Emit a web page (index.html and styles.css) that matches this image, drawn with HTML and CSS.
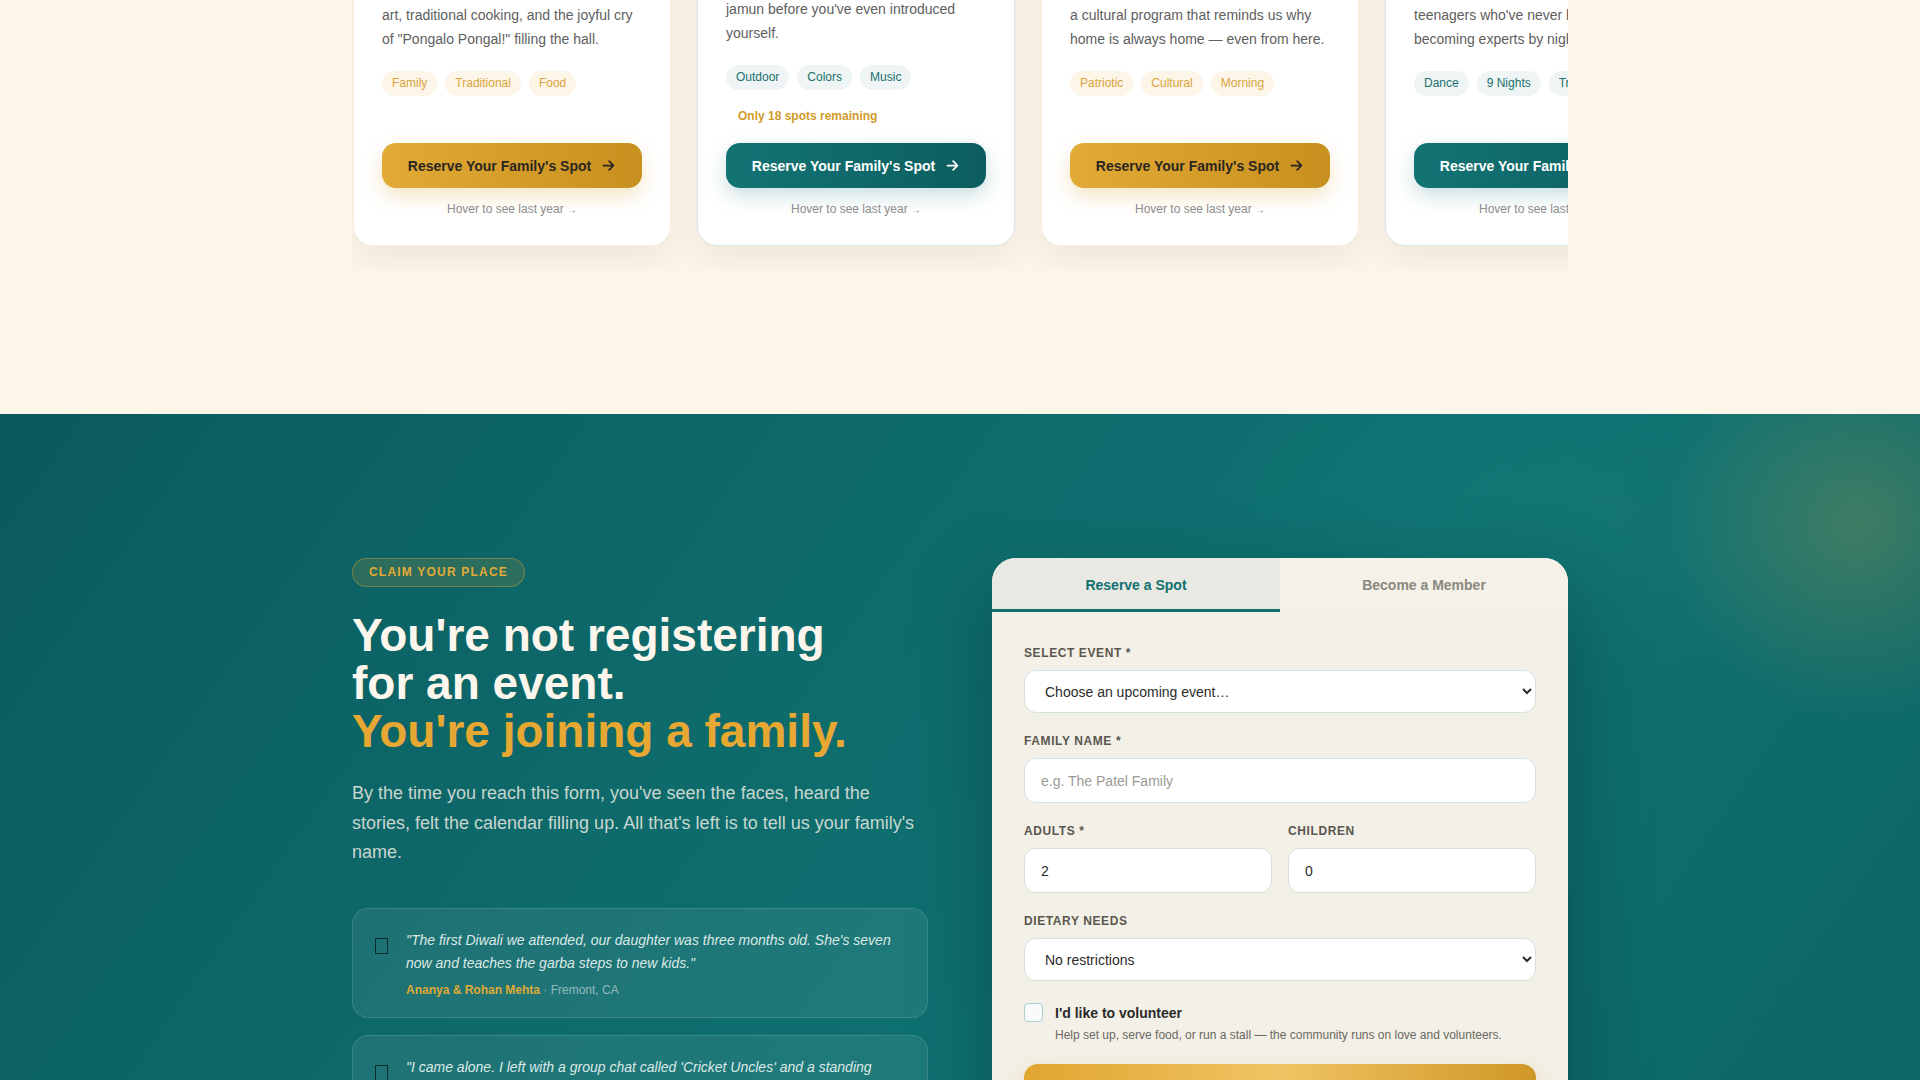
FILE: index.html
```html
<!DOCTYPE html>
<html lang="en">
<head>
    <meta charset="UTF-8">
    <meta name="viewport" content="width=device-width, initial-scale=1.0">
    <title>Join the Family – Community Events</title>
    <link rel="stylesheet" href="styles.css">
</head>
<body>
    <section class="events">
        <div class="events-clip">
            <div class="events-track">
                <article class="event-card event-card--gold">
                    <p class="event-date">Sun · January 14</p>
                    <h3 class="event-title">Pongal Harvest Festival</h3>
                    <p class="event-desc">Sweet pongal bubbling over, bright kolam art, traditional cooking, and the joyful cry of "Pongalo Pongal!" filling the hall.</p>
                    <div class="tags">
                        <span class="tag">Family</span>
                        <span class="tag">Traditional</span>
                        <span class="tag">Food</span>
                    </div>
                    <a class="btn-reserve" href="#">Reserve Your Family's Spot
                        <svg viewBox="0 0 24 24" width="15" height="15"><path d="M4 12h15M13 5l7 7-7 7"/></svg>
                    </a>
                    <p class="hover-hint">Hover to see last year <span class="hint-arrow">→</span></p>
                </article>

                <article class="event-card event-card--teal">
                    <p class="event-date">Sat · March 15</p>
                    <h3 class="event-title">Holi in the Park</h3>
                    <p class="event-desc">A morning of gulal and dhol beats. Someone's aunty will hand you a gulab jamun before you've even introduced yourself.</p>
                    <div class="tags">
                        <span class="tag">Outdoor</span>
                        <span class="tag">Colors</span>
                        <span class="tag">Music</span>
                    </div>
                    <p class="spots-left">Only 18 spots remaining</p>
                    <a class="btn-reserve" href="#">Reserve Your Family's Spot
                        <svg viewBox="0 0 24 24" width="15" height="15"><path d="M4 12h15M13 5l7 7-7 7"/></svg>
                    </a>
                    <p class="hover-hint">Hover to see last year <span class="hint-arrow">→</span></p>
                </article>

                <article class="event-card event-card--gold">
                    <p class="event-date">Fri · August 15</p>
                    <h3 class="event-title">Independence Day</h3>
                    <p class="event-desc">Flag hoisting at dawn, sweets, songs, and a cultural program that reminds us why home is always home — even from here.</p>
                    <div class="tags">
                        <span class="tag">Patriotic</span>
                        <span class="tag">Cultural</span>
                        <span class="tag">Morning</span>
                    </div>
                    <a class="btn-reserve" href="#">Reserve Your Family's Spot
                        <svg viewBox="0 0 24 24" width="15" height="15"><path d="M4 12h15M13 5l7 7-7 7"/></svg>
                    </a>
                    <p class="hover-hint">Hover to see last year <span class="hint-arrow">→</span></p>
                </article>

                <article class="event-card event-card--teal">
                    <p class="event-date">Oct 3 – Oct 11</p>
                    <h3 class="event-title">Navratri Garba Nights</h3>
                    <p class="event-desc">Nine nights of garba and dandiya, with teenagers who've never held a dandiya becoming experts by night three.</p>
                    <div class="tags">
                        <span class="tag">Dance</span>
                        <span class="tag">9 Nights</span>
                        <span class="tag">Traditional</span>
                    </div>
                    <a class="btn-reserve" href="#">Reserve Your Family's Spot
                        <svg viewBox="0 0 24 24" width="15" height="15"><path d="M4 12h15M13 5l7 7-7 7"/></svg>
                    </a>
                    <p class="hover-hint">Hover to see last year <span class="hint-arrow">→</span></p>
                </article>
            </div>
        </div>
    </section>

    <section class="join">
        <div class="join-inner">
            <div class="join-copy">
                <span class="eyebrow">Claim your place</span>
                <h2 class="join-title">You're not registering<br>for an event.<br><span class="accent">You're joining a family.</span></h2>
                <p class="join-lead">By the time you reach this form, you've seen the faces, heard the stories, felt the calendar filling up. All that's left is to tell us your family's name.</p>

                <div class="testimonials">
                    <figure class="testimonial">
                        <span class="testimonial-icon"></span>
                        <div>
                            <blockquote>"The first Diwali we attended, our daughter was three months old. She's seven now and teaches the garba steps to new kids."</blockquote>
                            <figcaption><strong>Ananya &amp; Rohan Mehta</strong> · Fremont, CA</figcaption>
                        </div>
                    </figure>
                    <figure class="testimonial">
                        <span class="testimonial-icon"></span>
                        <div>
                            <blockquote>"I came alone. I left with a group chat called 'Cricket Uncles' and a standing invitation to Sunday lunch."</blockquote>
                            <figcaption><strong>Vikram Iyer</strong> · San Jose, CA</figcaption>
                        </div>
                    </figure>
                </div>
            </div>

            <div class="form-card">
                <div class="form-tabs">
                    <button class="tab active" type="button">Reserve a Spot</button>
                    <button class="tab" type="button">Become a Member</button>
                </div>
                <form class="form-body">
                    <div class="field">
                        <label for="event">Select Event *</label>
                        <select id="event">
                            <option>Choose an upcoming event…</option>
                            <option>Pongal Harvest Festival</option>
                            <option>Holi in the Park</option>
                            <option>Independence Day</option>
                            <option>Navratri Garba Nights</option>
                        </select>
                    </div>
                    <div class="field">
                        <label for="family">Family Name *</label>
                        <input id="family" type="text" placeholder="e.g. The Patel Family">
                    </div>
                    <div class="field-row">
                        <div class="field">
                            <label for="adults">Adults *</label>
                            <input id="adults" type="text" value="2">
                        </div>
                        <div class="field">
                            <label for="children">Children</label>
                            <input id="children" type="text" value="0">
                        </div>
                    </div>
                    <div class="field">
                        <label for="diet">Dietary Needs</label>
                        <select id="diet">
                            <option>No restrictions</option>
                            <option>Vegetarian</option>
                            <option>Vegan</option>
                            <option>Jain</option>
                        </select>
                    </div>
                    <label class="volunteer">
                        <input type="checkbox">
                        <span>
                            <strong>I'd like to volunteer</strong>
                            <small>Help set up, serve food, or run a stall — the community runs on love and volunteers.</small>
                        </span>
                    </label>
                    <button class="btn-submit" type="submit">Reserve Our Spot</button>
                </form>
            </div>
        </div>
    </section>
</body>
</html>
```

FILE: styles.css
```css
* {
    box-sizing: border-box;
}
body {
    margin: 0;
    font-family: "Liberation Sans", Arial, sans-serif;
    color: #2b2b2b;
    background-color: #fcf5ea;
}

/* ---------- upcoming events strip ---------- */
.events {
    height: 414px;
    overflow: hidden;
    display: flex;
    flex-direction: column;
    justify-content: flex-end;
    padding-bottom: 144px;
    background-color: #fcf5ea;
}
.events-clip {
    flex-shrink: 0;
    width: 1216px;
    margin: 0 auto;
    overflow: hidden;
    padding-bottom: 24px;
}
.events-track {
    display: flex;
    align-items: flex-end;
    gap: 26px;
    padding-left: 1px;
}
.event-card {
    flex: 0 0 318px;
    display: flex;
    flex-direction: column;
    background-color: #fff;
    border-radius: 20px;
    padding: 28px 28px 27px;
    box-shadow: 0 12px 32px rgba(110, 80, 30, 0.09);
}
.event-card--gold {
    border: 1px solid #f7efe1;
}
.event-card--teal {
    border: 1px solid #d5e7e7;
}
.event-date {
    margin: 0 0 8px;
    font-size: 12px;
    color: #999;
}
.event-title {
    margin: 0 0 10px;
    font-size: 20px;
    color: #1f1f1f;
}
.event-desc {
    margin: 0;
    font-size: 14px;
    line-height: 23.3px;
    color: #5e5e5e;
}
.tags {
    display: flex;
    gap: 8px;
    margin-top: 20px;
    white-space: nowrap;
}
.tag {
    display: inline-block;
    height: 25px;
    line-height: 25px;
    padding: 0 10px;
    border-radius: 999px;
    font-size: 12px;
}
.event-card--gold .tag {
    background-color: #fdf6e8;
    color: #d9a33c;
}
.event-card--teal .tag {
    background-color: #eef5f4;
    color: #1b6f6f;
}
.spots-left {
    margin: 17px 0 0;
    padding-left: 12px;
    font-size: 12px;
    line-height: 18px;
    font-weight: bold;
    color: #d29a2a;
}
.btn-reserve {
    display: flex;
    align-items: center;
    justify-content: center;
    gap: 10px;
    height: 45px;
    margin-top: 47px;
    border-radius: 14px;
    font-size: 14px;
    font-weight: bold;
    text-decoration: none;
    white-space: nowrap;
}
.spots-left + .btn-reserve {
    margin-top: 18px;
}
.btn-reserve svg {
    fill: none;
    stroke: currentColor;
    stroke-width: 2.8;
    stroke-linecap: round;
    stroke-linejoin: round;
}
.event-card--gold .btn-reserve {
    background: linear-gradient(90deg, #e2aa36, #c8911f);
    color: #2a2620;
    box-shadow: 0 8px 20px rgba(214, 160, 48, 0.28);
}
.event-card--teal .btn-reserve {
    background: linear-gradient(90deg, #137474, #0c5d5f);
    color: #fff;
    box-shadow: 0 8px 20px rgba(15, 110, 110, 0.22);
}
.hover-hint {
    margin: 13px 0 0;
    text-align: center;
    font-size: 12px;
    line-height: 16px;
    color: #8c8c8c;
    white-space: nowrap;
}
.hint-arrow {
    font-size: 10px;
}

/* ---------- join / registration ---------- */
.join {
    padding: 144px 0 140px;
    background:
        radial-gradient(circle at 1860px 110px, rgba(214, 170, 70, 0.24), rgba(214, 170, 70, 0) 200px),
        radial-gradient(ellipse at 1600px 100px, rgba(30, 130, 125, 0.25), rgba(30, 130, 125, 0) 380px),
        linear-gradient(125deg, #0a5a5e 0%, #0e6a6b 35%, #0f7272 60%, #0c6464 100%);
}
.join-inner {
    width: 1216px;
    margin: 0 auto;
    display: grid;
    grid-template-columns: 576px 576px;
    gap: 64px;
    align-items: start;
}
.eyebrow {
    display: inline-block;
    padding: 6px 16px;
    line-height: 15px;
    border: 1px solid rgba(224, 168, 48, 0.4);
    border-radius: 999px;
    background-color: rgba(212, 160, 48, 0.16);
    color: #e2aa36;
    font-size: 12px;
    font-weight: bold;
    letter-spacing: 1.2px;
    text-transform: uppercase;
}
.join-title {
    margin: 24px 0 0;
    font-size: 46px;
    line-height: 48px;
    color: #fdf6ec;
}
.join-title .accent {
    color: #e6a832;
}
.join-lead {
    margin: 24px 0 0;
    font-size: 18px;
    line-height: 29.7px;
    color: rgba(253, 246, 236, 0.78);
}
.testimonials {
    margin-top: 40px;
    display: flex;
    flex-direction: column;
    gap: 17px;
}
.testimonial {
    margin: 0;
    display: flex;
    gap: 18px;
    padding: 20px 28px 18px 22px;
    border: 1px solid rgba(255, 255, 255, 0.12);
    border-radius: 16px;
    background-color: rgba(255, 255, 255, 0.07);
}
.testimonial-icon {
    flex: none;
    width: 13px;
    height: 16px;
    margin-top: 9px;
    border: 1.5px solid #092c2d;
}
.testimonial blockquote {
    margin: 0;
    font-size: 14px;
    line-height: 23.1px;
    font-style: italic;
    color: #dbe9e6;
}
.testimonial figcaption {
    margin-top: 6px;
    font-size: 12px;
    line-height: 18px;
    color: rgba(255, 255, 255, 0.5);
}
.testimonial figcaption strong {
    color: #dfa936;
}

/* form card */
.form-card {
    background-color: #f3f0e7;
    border-radius: 24px;
    overflow: hidden;
    box-shadow: 0 30px 80px rgba(0, 30, 30, 0.35);
}
.form-tabs {
    display: grid;
    grid-template-columns: 1fr 1fr;
    border-bottom: 1px solid #e2dfd6;
}
.tab {
    height: 54px;
    margin-bottom: -1px;
    padding: 3px 0 0;
    border: none;
    border-bottom: 3px solid transparent;
    background-color: #f4f1e9;
    font-family: inherit;
    font-size: 14px;
    font-weight: bold;
    color: #8a8880;
    cursor: pointer;
}
.tab.active {
    background-color: #e7e9e2;
    color: #11706f;
    border-bottom-color: #11706f;
}
.form-body {
    padding: 33px 32px 40px;
}
.field {
    margin-bottom: 20px;
}
.field label {
    display: block;
    margin-bottom: 9px;
    font-size: 12px;
    line-height: 16px;
    font-weight: bold;
    letter-spacing: 0.6px;
    text-transform: uppercase;
    color: #5b564e;
}
.field input,
.field select {
    display: block;
    width: 100%;
    border: 1px solid #d3e2e1;
    border-radius: 12px;
    background-color: #fff;
    font-family: inherit;
    font-size: 14px;
    color: #2b2b2b;
}
.field input {
    height: 45px;
    padding: 0 16px;
}
.field input::placeholder {
    color: #9c9a94;
}
.field select {
    height: 43px;
    padding: 0 8px 0 16px;
}
.field-row {
    display: grid;
    grid-template-columns: 1fr 1fr;
    gap: 16px;
}
.volunteer {
    display: flex;
    align-items: flex-start;
    gap: 12px;
    margin-top: 22px;
    cursor: pointer;
}
.volunteer input {
    appearance: none;
    flex: none;
    width: 19px;
    height: 19px;
    margin: 0;
    border: 1.5px solid #a9cfcf;
    border-radius: 4px;
    background-color: #f8fbfa;
}
.volunteer strong {
    display: block;
    font-size: 14px;
    line-height: 20px;
    color: #2a2a2a;
}
.volunteer small {
    display: block;
    margin-top: 3px;
    font-size: 12px;
    line-height: 18px;
    color: #6b6862;
}
.btn-submit {
    display: block;
    width: 100%;
    height: 54px;
    margin-top: 20px;
    border: none;
    border-radius: 14px;
    background: linear-gradient(90deg, #e0a630 0%, #f0c463 50%, #cf9726 100%);
    font-family: inherit;
    font-size: 16px;
    font-weight: bold;
    color: #2a2620;
    box-shadow: 0 10px 24px rgba(214, 160, 48, 0.3);
    cursor: pointer;
}
```
